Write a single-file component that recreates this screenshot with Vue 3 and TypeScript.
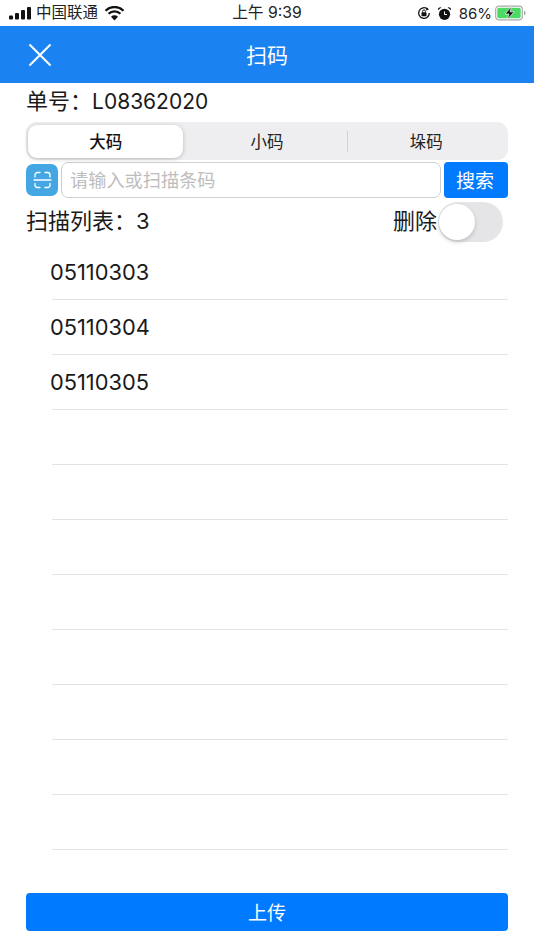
<script setup lang="ts">
const segments = ['大码', '小码', '垛码'];
const codes = ['05110303', '05110304', '05110305', '', '', '', '', '', '', '', ''];
</script>

<template>
  <div class="page">
    <div class="status">
      <div class="status-left">
        <svg class="signal" width="24" height="14" viewBox="0 0 24 14">
          <rect x="1" y="9.500" width="4" height="4" rx="1" />
          <rect x="7" y="7" width="4" height="6.500" rx="1" />
          <rect x="13" y="4" width="4" height="9.500" rx="1" />
          <rect x="19" y="1" width="4" height="12.500" rx="1" />
        </svg>
        <span class="carrier">中国联通</span>
        <svg class="wifi" width="21" height="15" viewBox="0 0 21 15">
          <path d="M10.500 14.500 7 10.800a5 5 0 0 1 7 0z" fill="#111" />
          <path d="M4.600 7.800a8.400 8.400 0 0 1 11.800 0" fill="none" stroke="#111" stroke-width="2.300" />
          <path d="M1.500 4.700a12.800 12.800 0 0 1 18 0" fill="none" stroke="#111" stroke-width="2.300" />
        </svg>
      </div>
      <span class="time">上午 9:39</span>
      <div class="status-right">
        <svg class="lock" width="14" height="14" viewBox="0 0 14 14">
          <path d="M12.300 7A5.300 5.300 0 1 1 10.500 3" fill="none" stroke="#111" stroke-width="1.300" />
          <path d="M9.500 1.200 12 3.400 9 4.500z" fill="#111" />
          <rect x="4.500" y="6.200" width="5" height="4" rx=".6" fill="#111" />
          <path d="M5.600 6.500V5.300a1.400 1.400 0 0 1 2.800 0v1.200" fill="none" stroke="#111" stroke-width="1" />
        </svg>
        <svg class="alarm" width="15" height="15" viewBox="0 0 15 15">
          <circle cx="7.500" cy="8.300" r="5.600" fill="#111" />
          <path d="M1 4.200a2.500 2.500 0 0 1 3.400-2.800zM14 4.200a2.500 2.500 0 0 0-3.400-2.800z" fill="#111" />
          <path d="M7.500 5.500v3H10" fill="none" stroke="#fff" stroke-width="1" />
        </svg>
        <span class="percent">86%</span>
        <svg class="battery" width="31" height="16" viewBox="0 0 31 16">
          <rect x=".7" y="1.200" width="26.600" height="13.600" rx="3.200" fill="none" stroke="#a9a9a9" stroke-width="1.200" />
          <rect x="2.300" y="2.800" width="23.400" height="10.400" rx="1.800" fill="#4cd964" />
          <path d="M29 5.800c1.200.3 1.600 1.100 1.600 2.200s-.4 1.900-1.600 2.200z" fill="#a9a9a9" />
          <path d="M16.500 1.500 10 9h4l-1.700 5.500 6.900-7.700h-4.100z" fill="#111" stroke="#fff" stroke-width=".7" />
        </svg>
      </div>
    </div>

    <header class="navbar">
      <svg class="close" width="24" height="24" viewBox="0 0 24 24">
        <path d="M1.500 1.500 22.500 22.500M22.500 1.500 1.500 22.500" fill="none" stroke="#fff" stroke-width="2" />
      </svg>
      <h1 class="title">扫码</h1>
    </header>

    <main class="content">
      <div class="order"><span class="order-label">单号：</span>L08362020</div>

      <div class="segments">
        <div
          v-for="(segment, index) in segments"
          :key="segment"
          class="segment"
          :class="{ active: index === 0, divided: index === 2 }"
        >
          {{ segment }}
        </div>
      </div>

      <div class="search-row">
        <button class="scan" type="button" aria-label="扫描">
          <svg width="19" height="18" viewBox="0 0 19 18">
            <path
              d="M2 6V4a2.500 2.500 0 0 1 2.500-2.500H7M12 1.500h2.500A2.500 2.500 0 0 1 17 4v2M2 12.500V14a2.500 2.500 0 0 0 2.500 2.500H7M12 16.500h2.500A2.500 2.500 0 0 0 17 14v-1.500M1 9h17"
              fill="none"
              stroke="#fff"
              stroke-width="1.300"
              stroke-linecap="round"
            />
          </svg>
        </button>
        <input class="search-input" type="text" placeholder="请输入或扫描条码" />
        <button class="search-button" type="button">搜索</button>
      </div>

      <div class="list-head">
        <span class="list-count">扫描列表：3</span>
        <div class="delete">
          <span class="delete-label">删除</span>
          <div class="switch"><div class="knob"></div></div>
        </div>
      </div>

      <ul class="list">
        <li v-for="(code, index) in codes" :key="index" class="row">
          <span class="code">{{ code }}</span>
        </li>
      </ul>
    </main>

    <button class="upload" type="button">上传</button>
  </div>
</template>

<style>
html,
body {
  margin: 0;
  background: #fff;
}
</style>

<style scoped>
.page {
  width: 534px;
  height: 950px;
  display: flex;
  flex-direction: column;
  overflow: hidden;
  background: #fff;
  color: #111;
  font-family: Inter, "Noto Sans CJK SC", sans-serif;
}

.status {
  height: 26px;
  flex: none;
  display: grid;
  grid-template-columns: 1fr auto 1fr;
  align-items: center;
  box-sizing: border-box;
  padding: 0 8px 0 8px;
  color: #222;
}

.status-left,
.status-right {
  display: flex;
  align-items: center;
}

.status-right {
  justify-content: flex-end;
}

.signal {
  fill: #111;
}

.carrier {
  margin-left: 4px;
  font-size: 15.500px;
  line-height: 20px;
}

.wifi {
  margin-left: 6px;
}

.time {
  font-size: 15.750px;
  line-height: 20px;
}

.lock {
  margin-right: 6px;
}

.alarm {
  margin-right: 7px;
}

.percent {
  font-size: 15px;
  margin-right: 3px;
}

.navbar {
  height: 57px;
  flex: none;
  box-sizing: border-box;
  padding-bottom: 2px;
  display: flex;
  align-items: center;
  justify-content: center;
  position: relative;
  background: #1b82f1;
}

.close {
  position: absolute;
  left: 28px;
  top: 17px;
}

.title {
  margin: 0;
  color: #fff;
  font-size: 21px;
  font-weight: 400;
}

.content {
  flex: 1;
  min-height: 0;
  padding: 0 26px;
}

.order {
  height: 39px;
  line-height: 36px;
  font-size: 21px;
  color: #1a1a1a;
}

.order-label {
  font-size: 22px;
}

.segments {
  height: 38px;
  display: grid;
  grid-template-columns: 1fr 1fr 1fr;
  box-sizing: border-box;
  padding: 3px 2px 2px;
  border-radius: 11px;
  background: #eeeef0;
  font-size: 16.500px;
}

.segment {
  display: flex;
  align-items: center;
  justify-content: center;
  box-sizing: border-box;
  padding-bottom: 2px;
  position: relative;
  color: #222;
}

.segment.active {
  margin-right: 4px;
  font-weight: 500;
  color: #111;
  background: #fff;
  border-radius: 9px;
  box-shadow: 0 1px 4px rgba(0, 0, 0, 0.22);
}

.segment.divided::before {
  content: "";
  position: absolute;
  left: 0;
  top: 6px;
  bottom: 6px;
  width: 1px;
  background: #d2d2d4;
}

.search-row {
  height: 36px;
  margin-top: 2px;
  display: flex;
  gap: 3px;
}

.scan {
  width: 32px;
  height: 32px;
  margin-top: 2px;
  padding: 0;
  flex: none;
  display: flex;
  align-items: center;
  justify-content: center;
  border: 0;
  border-radius: 7px;
  background: #44a7e3;
}

.search-input {
  flex: 1;
  min-width: 0;
  box-sizing: border-box;
  padding: 0 8px 1px;
  border: 1.500px solid #cfcfcf;
  border-radius: 7px;
  outline: 0;
  font-family: inherit;
  font-size: 18.200px;
}

.search-input::placeholder {
  color: #bdbdbd;
}

.search-button {
  width: 64px;
  flex: none;
  padding: 0 2px 1px 0;
  border: 0;
  border-radius: 4px;
  background: #007aff;
  color: #fff;
  font-family: inherit;
  font-size: 19px;
}

.list-head {
  height: 40px;
  margin-top: 4px;
  display: flex;
  align-items: center;
  justify-content: space-between;
  font-size: 22px;
  color: #1a1a1a;
}

.list-count,
.delete-label {
  padding-bottom: 6px;
}

.delete {
  display: flex;
  align-items: center;
  margin-right: 5px;
}

.switch {
  width: 65px;
  height: 40px;
  margin-left: 1px;
  box-sizing: border-box;
  padding: 2px 2px 2px 1px;
  border-radius: 20px;
  background: #e5e5e8;
}

.knob {
  width: 36px;
  height: 36px;
  border-radius: 50%;
  background: #fff;
  box-shadow: 0 2px 4px rgba(0, 0, 0, 0.18);
}

.list {
  margin: 3px 0 0;
  padding: 0;
  list-style: none;
}

.row {
  height: 55px;
  box-sizing: border-box;
  margin-left: 26px;
  display: flex;
  align-items: center;
  border-bottom: 1px solid #e3e3e3;
}

.code {
  margin-left: -2px;
  font-size: 21.800px;
  color: #1a1a1a;
}

.upload {
  height: 38px;
  flex: none;
  margin: 0 26px 19px;
  padding: 0 0 2px;
  border: 0;
  border-radius: 4px;
  background: #007aff;
  color: #fff;
  font-family: inherit;
  font-size: 19px;
}
</style>
